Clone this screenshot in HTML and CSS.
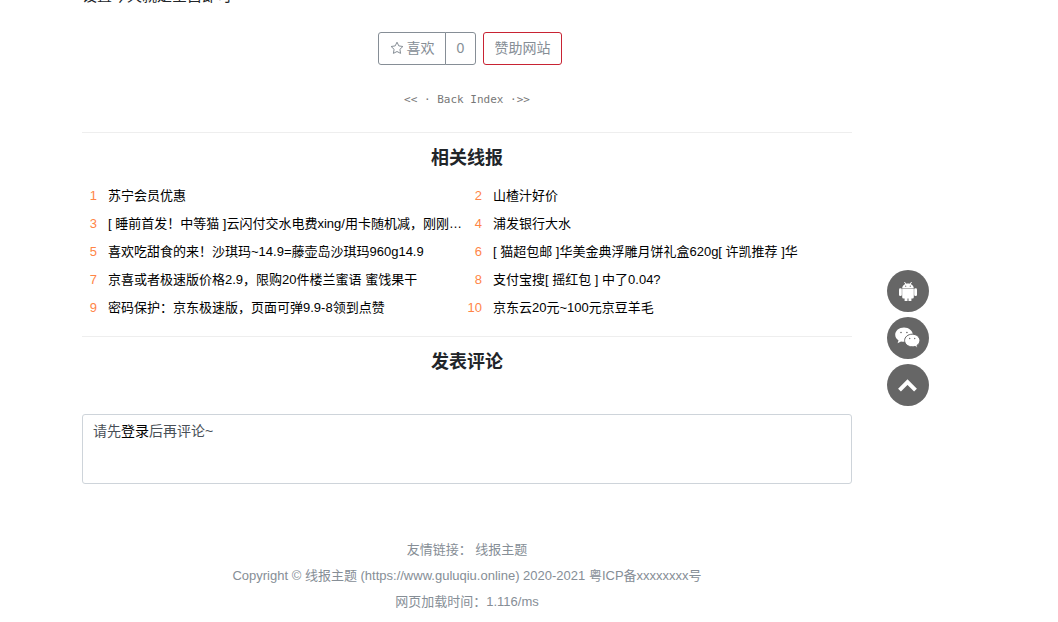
FILE: index.html
```html
<!DOCTYPE html>
<html lang="zh-CN">
<head>
<meta charset="utf-8">
<meta name="viewport" content="width=device-width, initial-scale=1">
<title>线报主题</title>
<link rel="stylesheet" href="styles.css">
</head>
<body>
<div class="page">
  <main class="content">
    <p class="article-end">设置今天就是空白即可</p>
    <div class="actions">
      <div class="like-group">
        <button type="button" class="btn like">
          <svg class="star" viewBox="0 0 14 14" aria-hidden="true"><path d="M7 1.2 8.8 4.9 12.9 5.5 9.9 8.3 10.6 12.4 7 10.5 3.4 12.4 4.1 8.3 1.1 5.5 5.2 4.9Z"/></svg>
          <span>喜欢</span>
        </button>
        <button type="button" class="btn count">0</button>
      </div>
      <button type="button" class="btn sponsor">赞助网站</button>
    </div>
    <a class="back-index" href="#">&lt;&lt; · Back Index ·&gt;&gt;</a>

    <section class="section">
      <h2 class="title">相关线报</h2>
      <ul class="related">
        <li><span class="num">1</span><a href="#">苏宁会员优惠</a></li>
        <li><span class="num">2</span><a href="#">山楂汁好价</a></li>
        <li><span class="num">3</span><a href="#">[ 睡前首发！中等猫 ]云闪付交水电费xing/用卡随机减，刚刚…</a></li>
        <li><span class="num">4</span><a href="#">浦发银行大水</a></li>
        <li><span class="num">5</span><a href="#">喜欢吃甜食的来！沙琪玛~14.9=藤壶岛沙琪玛960g14.9</a></li>
        <li><span class="num">6</span><a href="#">[ 猫超包邮 ]华美金典浮雕月饼礼盒620g[ 许凯推荐 ]华</a></li>
        <li><span class="num">7</span><a href="#">京喜或者极速版价格2.9，限购20件楼兰蜜语 蜜饯果干</a></li>
        <li><span class="num">8</span><a href="#">支付宝搜[ 摇红包 ] 中了0.04?</a></li>
        <li><span class="num">9</span><a href="#">密码保护：京东极速版，页面可弹9.9-8领到点赞</a></li>
        <li><span class="num">10</span><a href="#">京东云20元~100元京豆羊毛</a></li>
      </ul>
    </section>

    <section class="section">
      <h2 class="title">发表评论</h2>
      <div class="comment-box">请先<a href="#">登录</a>后再评论~</div>
    </section>

    <footer class="footer">
      <p>友情链接： <a href="#">线报主题</a></p>
      <p>Copyright © <a href="#">线报主题</a> (https://www.guluqiu.online) 2020-2021 粤ICP备xxxxxxxx号</p>
      <p>网页加载时间：1.116/ms</p>
    </footer>
  </main>

  <aside class="tools">
    <button type="button" class="tool" aria-label="Android">
      <svg viewBox="0 0 42 42" aria-hidden="true">
        <path class="line" d="M17.5 12 19 14.5M24.5 12 23 14.5"/>
        <path class="fill" d="M15.2 18.2C15.4 11.8 26.6 11.8 26.8 18.2ZM15.2 18.7h11.6v8.6q0 1.2-1.2 1.2H24.4v2.5h-2.9v-2.5h-1V31h-2.9v-2.5h-1.2q-1.2 0-1.2-1.2Z"/>
        <rect class="fill" x="12" y="18.2" width="2.8" height="7.8" rx="1.3"/>
        <rect class="fill" x="27.2" y="18.2" width="2.8" height="7.8" rx="1.3"/>
        <circle class="eye" cx="18.7" cy="16.2" r=".6"/><circle class="eye" cx="23.3" cy="16.2" r=".6"/>
      </svg>
    </button>
    <button type="button" class="tool" aria-label="微信">
      <svg viewBox="0 0 42 42" aria-hidden="true">
        <path class="fill" d="M17 10.5c-4.9 0-8.8 3.2-8.8 7.2 0 2.3 1.3 4.3 3.3 5.6l-.9 2.9 3.4-1.8c1 .3 2 .4 3 .4 4.9 0 8.8-3.2 8.8-7.1s-3.9-7.2-8.8-7.2Z"/>
        <path class="fill front" d="M25.2 17.2c-4.2 0-7.6 2.8-7.6 6.3s3.4 6.3 7.6 6.3c1 0 1.9-.1 2.7-.4l2.8 1.5-.7-2.5c1.8-1.2 2.9-2.9 2.9-4.9 0-3.5-3.5-6.3-7.7-6.3Z"/>
        <circle class="eye" cx="14" cy="15.5" r=".8"/><circle class="eye" cx="19.9" cy="15.5" r=".8"/>
        <circle class="eye" cx="22.7" cy="21.5" r=".7"/><circle class="eye" cx="27.7" cy="21.5" r=".7"/>
      </svg>
    </button>
    <button type="button" class="tool" aria-label="返回顶部">
      <svg viewBox="0 0 42 42" aria-hidden="true"><path class="arrow" d="M12.5 26.2 20.5 18.2 28.5 26.2"/></svg>
    </button>
  </aside>
</div>
</body>
</html>
```
FILE: styles.css
```css
* { box-sizing: border-box; }

body {
  margin: 0;
  overflow: hidden;
  background: #fff;
  color: #212529;
  font: 14px/20px "Liberation Sans", "Noto Sans CJK SC", sans-serif;
}

a { color: #000; text-decoration: none; }

.page {
  display: grid;
  grid-template-columns: minmax(0, 770px) 42px;
  column-gap: 35px;
  padding-left: 82px;
}

.content { display: flex; flex-direction: column; }

.article-end {
  margin: -14px 0 26px;
  font-size: 15px;
}

.actions {
  display: flex;
  justify-content: center;
  gap: 7px;
  padding-left: 6px;
}

.like-group { display: flex; }

.btn {
  display: flex;
  align-items: center;
  gap: 3px;
  height: 33px;
  padding: 0 11px 2px;
  border: 1px solid #868e96;
  border-radius: 3px;
  background: #fff;
  color: #868e96;
  font: inherit;
}

.like { padding-right: 10px; border-radius: 3px 0 0 3px; }
.count { margin-left: -1px; border-radius: 0 3px 3px 0; }
.sponsor { padding-left: 10px; border-color: #c82333; }

.star {
  width: 14px;
  height: 14px;
  fill: none;
  stroke: currentColor;
  stroke-linejoin: round;
}

.back-index {
  align-self: center;
  margin: 25px 0 22px;
  color: #777;
  font: 11px/20px "DejaVu Sans Mono", monospace;
}

.section { border-top: 1px solid #eee; }

.title {
  margin: 13px 0 12px;
  font-size: 18px;
  line-height: 24px;
  text-align: center;
}

.related {
  display: grid;
  grid-template-columns: repeat(2, minmax(0, 1fr));
  margin: 0 0 14px;
  padding: 0;
  list-style: none;
  font-size: 13px;
  line-height: 28px;
}

.related li {
  display: flex;
  gap: 11px;
  padding-right: 4px;
}

.num {
  display: flex;
  flex: 0 0 15px;
  justify-content: flex-end;
  color: #ff8547;
}

.related a {
  overflow: hidden;
  text-overflow: ellipsis;
  white-space: nowrap;
}

.comment-box {
  min-height: 70px;
  margin-top: 40px;
  padding: 6px 10px;
  border: 1px solid #ced4da;
  border-radius: 3px;
  color: #495057;
}

.footer {
  margin-top: 53px;
  color: #868e96;
  font-size: 13px;
  line-height: 26px;
  text-align: center;
}

.footer p { margin: 0; }
.footer a { color: inherit; }

.tools {
  position: sticky;
  top: 270px;
  display: grid;
  gap: 5px;
  align-self: start;
}

.tool {
  width: 42px;
  height: 42px;
  padding: 0;
  border: 0;
  border-radius: 50%;
  background: #666;
}

.tool svg { display: block; }
.fill { fill: #fff; }
.front { stroke: #666; stroke-width: 1; }
.eye { fill: #666; }
.line { fill: none; stroke: #fff; stroke-width: 1; }
.arrow { fill: none; stroke: #fff; stroke-width: 4; }
```
